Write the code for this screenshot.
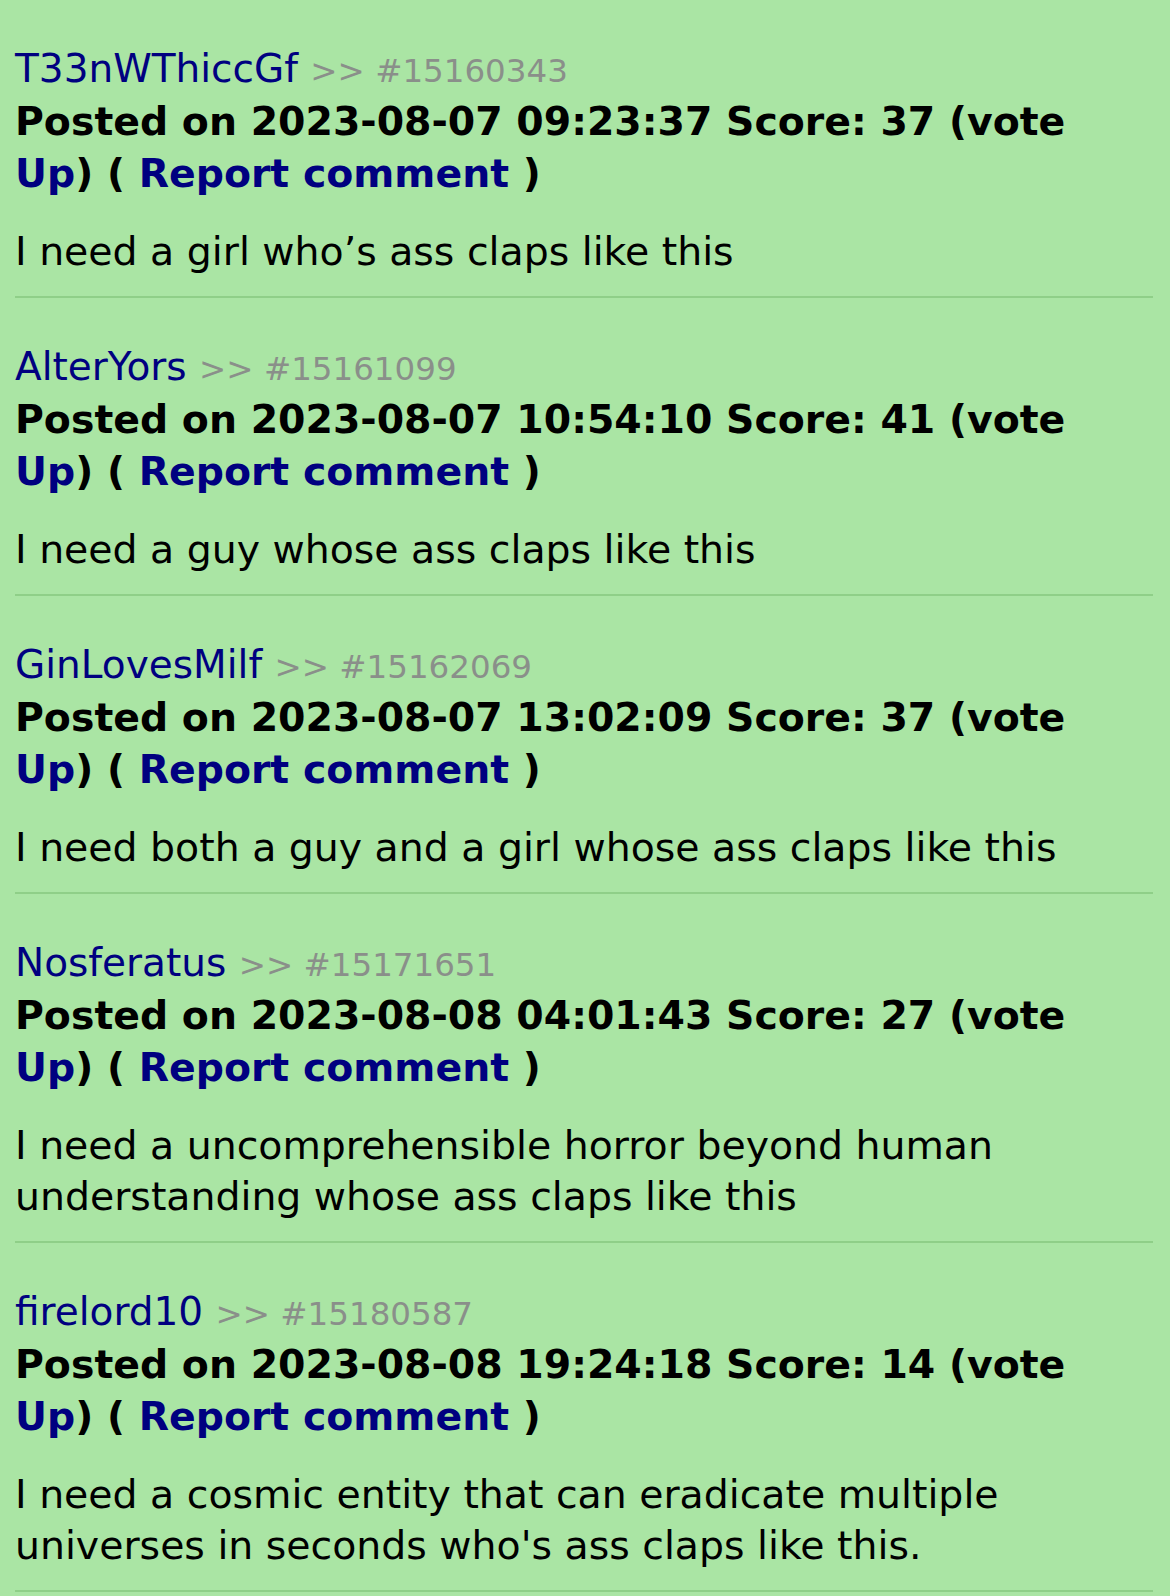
const comments = [
  {
    name: "T33nWThiccGf",
    id: "15160343",
    date: "2023-08-07 09:23:37",
    score: 37,
    body: "I need a girl who’s ass claps like this",
  },
  {
    name: "AlterYors",
    id: "15161099",
    date: "2023-08-07 10:54:10",
    score: 41,
    body: "I need a guy whose ass claps like this",
  },
  {
    name: "GinLovesMilf",
    id: "15162069",
    date: "2023-08-07 13:02:09",
    score: 37,
    body: "I need both a guy and a girl whose ass claps like this",
  },
  {
    name: "Nosferatus",
    id: "15171651",
    date: "2023-08-08 04:01:43",
    score: 27,
    body: "I need a uncomprehensible horror beyond human understanding whose ass claps like this",
  },
  {
    name: "firelord10",
    id: "15180587",
    date: "2023-08-08 19:24:18",
    score: 14,
    body: "I need a cosmic entity that can eradicate multiple universes in seconds who's ass claps like this.",
  },
];

export default function App() {
  return (
    <div className="min-h-screen bg-[#aae5a4] pt-[45px] pl-[15px] pr-[17px] font-['DejaVu_Sans',Verdana,sans-serif] text-black">
      {comments.map((c) => (
        <div key={c.id}>
          <div className="text-[39px] leading-[48px] whitespace-nowrap">
            <span className="text-[#000080]">{c.name}</span>{" "}
            <span className="text-[#8a8f8a] text-[32.5px]">&gt;&gt; #{c.id}</span>
          </div>
          <p className="text-[39.4px] leading-[52px] font-bold pr-[10px]">
            Posted on {c.date} Score: {c.score} (vote <span className="text-[#000080]">Up</span>) ({" "}
            <span className="text-[#000080]">Report comment</span> )
          </p>
          <p className="mt-[27px] text-[39.4px] leading-[51px]">{c.body}</p>
          <div className="mt-[19px] mb-[45px] h-[2px] bg-[#8fcf88]"></div>
        </div>
      ))}
    </div>
  );
}
